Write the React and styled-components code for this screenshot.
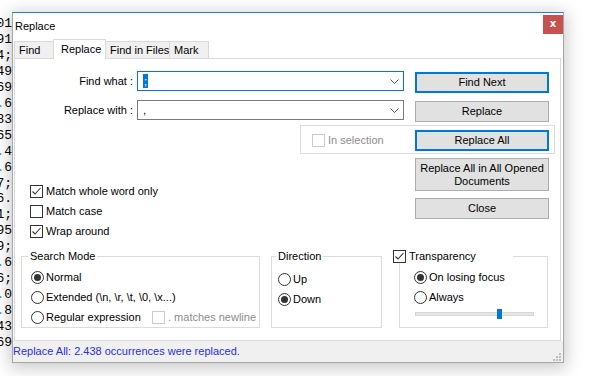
import React from "react";
import styled, { createGlobalStyle } from "styled-components";

const GlobalStyle = createGlobalStyle`
  html, body { margin: 0; padding: 0; background: #fff; }
  body {
    font-family: "Liberation Sans", Arial, sans-serif;
    font-size: 11px;
    color: #000;
  }
  * { box-sizing: border-box; }
`;

// tails of the editor lines that peek out left of the dialog
const codeTails = [
  "0.01", "2.91", "44;", "1.49", "3.69", [".", "6"], "4.83", "7.65",
  [".", "4"], [".", "6"], "97;", "26.", "11;", "4.95", "39;", [".", "6"],
  "56;", [".", "0"], [".", "8"], "1.43", "5.69",
];

const CheckMark = () => (
  <svg width="11" height="11" viewBox="0 0 11 11">
    <path d="M1.5 5.5 L4 8 L9.5 2" fill="none" stroke="#333" strokeWidth="1.1" />
  </svg>
);

const Check = ({ checked, disabled, children }) => (
  <CheckRow $disabled={disabled}>
    <CheckBox $disabled={disabled}>{checked && <CheckMark />}</CheckBox>
    <span>{children}</span>
  </CheckRow>
);

const Radio = ({ checked, w, children }) => (
  <RadioRow $w={w}>
    <RadioDot $checked={checked} />
    <span>{children}</span>
  </RadioRow>
);

const Chevron = () => (
  <ChevronIcon width="9" height="5" viewBox="0 0 9 5">
    <path d="M0.5 0.5 L4.5 4.5 L8.5 0.5" fill="none" stroke="#555" strokeWidth="1" />
  </ChevronIcon>
);

const Grip = () => (
  <GripIcon width="8" height="8" viewBox="0 0 8 8">
    <rect x="6" y="0" width="2" height="2" fill="#bdbdbd" />
    <rect x="3" y="3" width="2" height="2" fill="#bdbdbd" />
    <rect x="6" y="3" width="2" height="2" fill="#bdbdbd" />
    <rect x="0" y="6" width="2" height="2" fill="#bdbdbd" />
    <rect x="3" y="6" width="2" height="2" fill="#bdbdbd" />
    <rect x="6" y="6" width="2" height="2" fill="#bdbdbd" />
  </GripIcon>
);

const App = () => {
  return (
    <>
      <GlobalStyle />
      <Desktop>
        <Editor>
          {codeTails.map((t, i) => (
            <CodeLine key={i}>
              {Array.isArray(t) ? (
                <>
                  <Marker>{t[0]}</Marker>
                  {t[1]}
                </>
              ) : (
                t
              )}
            </CodeLine>
          ))}
        </Editor>

        <Window>
          <TitleBar>
            <Title>Replace</Title>
            <CloseButton>x</CloseButton>
          </TitleBar>

          <TabStrip>
            <Tab $w={40}>Find</Tab>
            <Tab $w={53} $active>Replace</Tab>
            <Tab $w={65}>Find in Files</Tab>
            <Tab $w={40}>Mark</Tab>
          </TabStrip>

          <Panel>
            <FieldGrid>
              <FieldLabel>Find what :</FieldLabel>
              <Combo $focused>
                <Selected>;</Selected>
                <Chevron />
              </Combo>
              <Button $default>Find Next</Button>

              <FieldLabel>Replace with :</FieldLabel>
              <Combo>
                <span>,</span>
                <Chevron />
              </Combo>
              <Button>Replace</Button>
            </FieldGrid>

            <SelectionRow>
              <SelectionBox>
                <Check disabled>In selection</Check>
                <Button $default>Replace All</Button>
              </SelectionBox>
            </SelectionRow>

            <Middle>
              <Options>
                <Check checked>Match whole word only</Check>
                <Check>Match case</Check>
                <Check checked>Wrap around</Check>
              </Options>
              <ButtonColumn>
                <Button $tall>
                  Replace All in All Opened
                  <br />
                  Documents
                </Button>
                <Button>Close</Button>
              </ButtonColumn>
            </Middle>

            <Groups>
              <Group $w={239}>
                <GroupTitle $offset={6}>Search Mode</GroupTitle>
                <GroupBody $pad="4px 0 0 9px">
                  <Radio checked>Normal</Radio>
                  <Radio>Extended (\n, \r, \t, \0, \x...)</Radio>
                  <InlineRow>
                    <Radio w={121}>Regular expression</Radio>
                    <Check disabled>. matches newline</Check>
                  </InlineRow>
                </GroupBody>
              </Group>

              <Group $w={111}>
                <GroupTitle $offset={4}>Direction</GroupTitle>
                <GroupBody $pad="6px 0 0 6px">
                  <Radio>Up</Radio>
                  <Radio checked>Down</Radio>
                </GroupBody>
              </Group>

              <Group $w={149}>
                <GroupTitle $offset={-7} $w={120} $bare>
                  <Check checked>Transparency</Check>
                </GroupTitle>
                <GroupBody $pad="4px 0 0 14px">
                  <Radio checked>On losing focus</Radio>
                  <Radio>Always</Radio>
                  <Slider>
                    <SliderTrack />
                    <SliderThumb style={{ left: 82 }} />
                  </Slider>
                </GroupBody>
              </Group>
            </Groups>
          </Panel>

          <StatusBar>
            <StatusText>Replace All: 2.438 occurrences were replaced.</StatusText>
            <Grip />
          </StatusBar>
        </Window>
      </Desktop>
    </>
  );
};

const Desktop = styled.div`
  position: relative;
  width: 589px;
  height: 376px;
  overflow: hidden;
  background: #fff;
`;

const Editor = styled.div`
  width: 12px;
  padding-top: 16px;
  overflow: hidden;
  font-family: "Liberation Mono", "Courier New", monospace;
  font-size: 13px;
  line-height: 15.95px;
  color: #000;
`;

const CodeLine = styled.div`
  display: flex;
  justify-content: flex-end;
  white-space: pre;
`;

const Marker = styled.span`
  color: #3d9be6;
`;

const Window = styled.div`
  position: absolute;
  left: 12px;
  top: 12px;
  width: 552px;
  height: 351px;
  display: flex;
  flex-direction: column;
  background: #fff;
  border: 1px solid #a6a6a6;
  border-top-color: #1883d7;
  box-shadow: 0 3px 16px 2px rgba(0, 0, 0, 0.22);
`;

const TitleBar = styled.div`
  height: 26px;
  display: flex;
  justify-content: space-between;
  align-items: flex-start;
  padding-left: 2px;
`;

const Title = styled.div`
  align-self: center;
  padding-bottom: 1px;
  font-size: 11px;
`;

const CloseButton = styled.div`
  width: 20px;
  height: 19px;
  margin-top: 2px;
  background: #c75050;
  color: #fff;
  font-weight: bold;
  font-size: 10px;
  font-family: "DejaVu Sans", sans-serif;
  display: flex;
  align-items: center;
  justify-content: center;
  padding-bottom: 2px;
`;

const TabStrip = styled.div`
  height: 19px;
  display: flex;
  align-items: flex-end;
  padding-left: 1px;
`;

const Tab = styled.div`
  position: relative;
  width: ${({ $w }) => $w}px;
  height: ${({ $active }) => ($active ? 20 : 17)}px;
  margin-bottom: ${({ $active }) => ($active ? -1 : 0)}px;
  z-index: ${({ $active }) => ($active ? 1 : 0)};
  padding-left: ${({ $active }) => ($active ? 7 : 4)}px;
  line-height: ${({ $active }) => ($active ? 18 : 16)}px;
  background: ${({ $active }) => ($active ? "#fff" : "#f0f0f0")};
  border: 1px solid #d9d9d9;
  border-bottom: none;
  margin-right: -1px;
  white-space: nowrap;
`;

const Panel = styled.div`
  height: 283px;
  margin: 0 2px 0 1px;
  border: 1px solid #d9d9d9;
  background: #fff;
  display: flex;
  flex-direction: column;
`;

const FieldGrid = styled.div`
  display: grid;
  grid-template-columns: 122px 278px 134px;
  grid-auto-rows: 21px;
  row-gap: 8px;
  padding-top: 12px;
  align-items: start;
`;

const FieldLabel = styled.div`
  align-self: center;
  text-align: right;
  padding-right: 4px;
  padding-bottom: 1px;
`;

const Combo = styled.div`
  width: 267px;
  height: 20px;
  display: flex;
  align-items: center;
  padding-left: 5px;
  border: 1px solid ${({ $focused }) => ($focused ? "#0078d7" : "#7a7a7a")};
  background: #fff;
`;

const Selected = styled.span`
  background: #0078d7;
  color: #fff;
  line-height: 14px;
  padding: 0 1px;
`;

const ChevronIcon = styled.svg`
  margin-left: auto;
  margin-right: 4px;
`;

const Button = styled.div`
  width: 134px;
  height: ${({ $tall }) => ($tall ? 33 : 21)}px;
  margin-top: ${({ $default }) => ($default ? 1 : 1)}px;
  display: flex;
  align-items: center;
  justify-content: center;
  text-align: center;
  line-height: 13px;
  background: #e1e1e1;
  border: ${({ $default }) => ($default ? "2px solid #0078d7" : "1px solid #adadad")};
  color: #000;
`;

const SelectionRow = styled.div`
  display: flex;
  justify-content: flex-end;
  padding-right: 5px;
  margin-top: 4px;
`;

const SelectionBox = styled.div`
  width: 255px;
  height: 29px;
  display: flex;
  justify-content: space-between;
  align-items: center;
  padding: 3px 5px 2px 11px;
  border: 1px solid #dcdcdc;

  ${Button} {
    margin-top: 0;
  }
`;

const Middle = styled.div`
  display: flex;
  justify-content: space-between;
  padding-right: 11px;
`;

const Options = styled.div`
  display: flex;
  flex-direction: column;
  padding: 27px 0 0 15px;
`;

const ButtonColumn = styled.div`
  display: flex;
  flex-direction: column;
  gap: 6px;
  padding-top: 3px;
`;

const CheckRow = styled.label`
  display: flex;
  align-items: center;
  gap: 3px;
  height: 20px;
  white-space: nowrap;
  color: ${({ $disabled }) => ($disabled ? "#8d8d8d" : "#000")};
`;

const CheckBox = styled.span`
  width: 13px;
  height: 13px;
  flex: none;
  display: flex;
  align-items: center;
  justify-content: center;
  background: #fff;
  border: 1px solid ${({ $disabled }) => ($disabled ? "#cccccc" : "#333")};
`;

const RadioRow = styled.label`
  display: flex;
  align-items: center;
  gap: 2px;
  height: 20px;
  white-space: nowrap;
  ${({ $w }) => ($w ? `width: ${$w}px;` : "")}
`;

const RadioDot = styled.span`
  width: 13px;
  height: 13px;
  flex: none;
  border-radius: 50%;
  border: 1px solid #333;
  background: #fff;
  display: flex;
  align-items: center;
  justify-content: center;

  &::after {
    content: "";
    width: 7px;
    height: 7px;
    border-radius: 50%;
    background: #333;
    display: ${({ $checked }) => ($checked ? "block" : "none")};
  }
`;

const InlineRow = styled.div`
  display: flex;
  align-items: center;
`;

const Groups = styled.div`
  display: flex;
  align-items: flex-start;
  padding-left: 6px;
  margin-top: 8px;

  & > fieldset:nth-child(2) {
    margin-left: 11px;
  }
  & > fieldset:nth-child(3) {
    margin-left: 17px;
  }
`;

const Group = styled.fieldset`
  width: ${({ $w }) => $w}px;
  height: 79px;
  margin: 0;
  padding: 0;
  min-width: 0;
  border: 1px solid #dcdcdc;
`;

const GroupTitle = styled.legend`
  margin-left: ${({ $offset }) => $offset}px;
  padding: ${({ $bare }) => ($bare ? 0 : "0 2px")};
  height: 14px;
  line-height: 14px;
  background: #fff;
  ${({ $w }) => ($w ? `width: ${$w}px;` : "")}

  ${CheckRow} {
    height: 14px;
  }
`;

const GroupBody = styled.div`
  display: flex;
  flex-direction: column;
  padding: ${({ $pad }) => $pad};
`;

const Slider = styled.div`
  position: relative;
  width: 119px;
  height: 10px;
  margin: 2px 0 0 1px;
  display: flex;
  align-items: center;
`;

const SliderTrack = styled.div`
  width: 100%;
  height: 4px;
  background: #e7e7e7;
  border: 1px solid #d6d6d6;
`;

const SliderThumb = styled.div`
  position: absolute;
  top: 0;
  width: 5px;
  height: 10px;
  background: #0078d7;
`;

const StatusBar = styled.div`
  flex: 1;
  display: flex;
  align-items: center;
  background: #f0f0f0;
`;

const StatusText = styled.div`
  color: #2b2bf0;
  padding-bottom: 1px;
`;

const GripIcon = styled.svg`
  margin-left: auto;
  margin-right: 2px;
  align-self: flex-end;
  margin-bottom: 1px;
`;

export default App;
